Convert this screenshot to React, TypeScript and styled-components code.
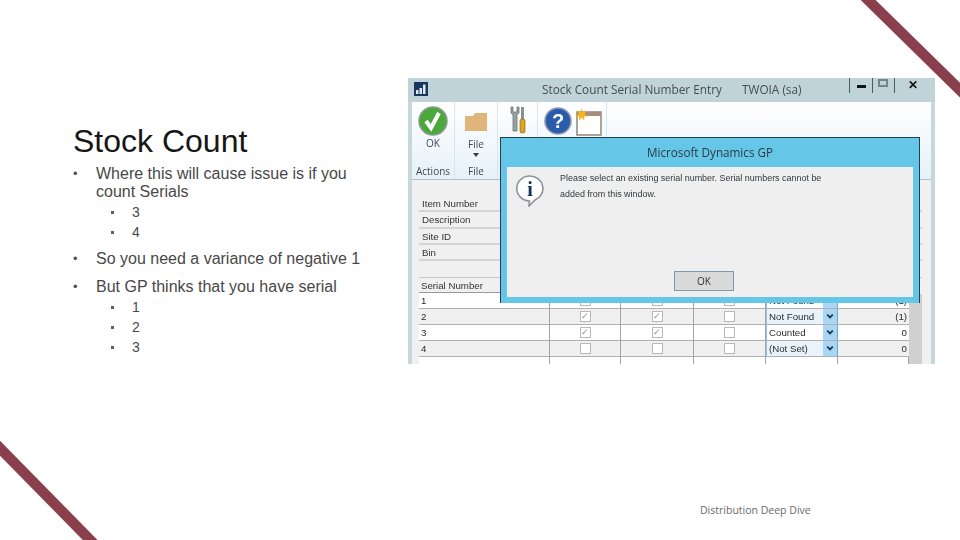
import React from 'react'
import styled, { createGlobalStyle } from 'styled-components'

const GlobalStyle = createGlobalStyle`
html, body {
  margin: 0;
  padding: 0;
  background: #ffffff;
}
`

const rows = [
  { id: '1', a: false, b: false, status: 'Not Found', variance: '(1)' },
  { id: '2', a: true, b: true, status: 'Not Found', variance: '(1)' },
  { id: '3', a: true, b: true, status: 'Counted', variance: '0' },
  { id: '4', a: false, b: false, status: '(Not Set)', variance: '0' },
]

const App: React.FC = () => {
  return (
    <Slide>
      <GlobalStyle />
      <Stripes viewBox="0 0 960 540">
        <line x1="862" y1="-6" x2="968" y2="98" />
        <line x1="-8" y1="440" x2="98" y2="548" />
      </Stripes>

      <TextColumn>
        <Title>Stock Count</Title>
        <Bullet>Where this will cause issue is if you count Serials</Bullet>
        <SubList>
          <SubBullet>3</SubBullet>
          <SubBullet>4</SubBullet>
        </SubList>
        <Bullet>So you need a variance of negative 1</Bullet>
        <Bullet>But GP thinks that you have serial</Bullet>
        <SubList>
          <SubBullet>1</SubBullet>
          <SubBullet>2</SubBullet>
          <SubBullet>3</SubBullet>
        </SubList>
      </TextColumn>

      <Window>
        <TitleBar>
          <AppIcon viewBox="0 0 14 14">
            <rect width="14" height="14" fill="#17375e" />
            <rect x="2" y="8" width="2.5" height="4" fill="#dfeaf2" />
            <rect x="5.5" y="6" width="2.5" height="6" fill="#dfeaf2" />
            <rect x="9" y="2.5" width="2.5" height="9.5" fill="#dfeaf2" />
          </AppIcon>
          <WindowTitle>Stock Count Serial Number Entry</WindowTitle>
          <WindowUser>TWOIA (sa)</WindowUser>
          <Controls>
            <Minimize />
            <Maximize />
            <CloseGlyph>✕</CloseGlyph>
          </Controls>
        </TitleBar>

        <Ribbon>
          <RibbonGroup $width={43}>
            <RibbonTop>
              <svg width="30" height="30" viewBox="0 0 30 30">
                <circle cx="15" cy="15" r="14" fill="#4aa93a" stroke="#8a9a94" strokeWidth="1.5" />
                <path d="M8 15l5 7 8-15" fill="none" stroke="#ffffff" strokeWidth="4" />
              </svg>
              <RibbonLabel>OK</RibbonLabel>
            </RibbonTop>
            <RibbonLabel>Actions</RibbonLabel>
          </RibbonGroup>
          <RibbonGroup $width={43}>
            <RibbonTop>
              <FolderIcon viewBox="0 0 24 20">
                <path d="M1 4h8l2-3h12v18H1z" fill="#dfb57a" />
              </FolderIcon>
              <RibbonLabel>File</RibbonLabel>
              <Caret />
            </RibbonTop>
            <RibbonLabel>File</RibbonLabel>
          </RibbonGroup>
          <ToolButton>
            <svg width="18" height="28" viewBox="0 0 18 28">
              <path d="M2 1v6l2 2v16h4V9l2-2V1L8 1v5H4V1z" fill="#9aa3a3" stroke="#5f6868" strokeWidth="0.7" />
              <rect x="12" y="1" width="3" height="12" fill="#8a8f8f" />
              <rect x="11" y="13" width="5" height="14" rx="2" fill="#e0a51e" stroke="#6b5310" strokeWidth="0.6" />
            </svg>
          </ToolButton>
          <ToolButton>
            <svg width="62" height="30" viewBox="0 0 62 30">
              <circle cx="17" cy="15" r="13" fill="#2a5cab" stroke="#8c9cb0" strokeWidth="1.6" />
              <text x="17" y="22" fontFamily="Liberation Sans" fontWeight="700" fontSize="20" textAnchor="middle" fill="#ffffff">?</text>
              <rect x="36" y="6" width="24" height="23" fill="#ffffff" stroke="#8b7f70" strokeWidth="1.4" />
              <rect x="36" y="6" width="24" height="4" fill="#a58f7b" />
              <path transform="translate(3 2)" d="M37 0l1.6 4 4-1.400-2 3.600 3.400 2-4 .6.4 4-2.600-3-3 3 .6-4-4-.8 3.600-2-2-3.400 4 1.400z" fill="#f7b422" />
            </svg>
          </ToolButton>
        </Ribbon>

        <Body>
          <FormFields>
            <Field>Item Number</Field>
            <Field>Description</Field>
            <Field>Site ID</Field>
            <Field>Bin</Field>
          </FormFields>

          <GridWrap>
            <SerialGrid>
              <HeaderCell>Serial Number</HeaderCell>
              <HeaderCell />
              <HeaderCell />
              <HeaderCell />
              <HeaderCell />
              <HeaderCell />
              {rows.map((row, i) => (
                <React.Fragment key={row.id}>
                  <Cell $shaded={i % 2 === 1}>{row.id}</Cell>
                  <CheckCell $shaded={i % 2 === 1}><CheckBox $checked={row.a}>{row.a ? '✓' : ''}</CheckBox></CheckCell>
                  <CheckCell $shaded={i % 2 === 1}><CheckBox $checked={row.b}>{row.b ? '✓' : ''}</CheckBox></CheckCell>
                  <CheckCell $shaded={i % 2 === 1}><CheckBox $checked={false} /></CheckCell>
                  <SelectCell $shaded={i % 2 === 1}>
                    <span>{row.status}</span>
                    <SelectArrow viewBox="0 0 14 16">
                      <path d="M4 6l3 3 3-3" fill="none" stroke="#1d3a55" strokeWidth="2" />
                    </SelectArrow>
                  </SelectCell>
                  <NumberCell $shaded={i % 2 === 1}>{row.variance}</NumberCell>
                </React.Fragment>
              ))}
              <EmptyCell />
              <EmptyCell />
              <EmptyCell />
              <EmptyCell />
              <EmptyCell />
              <EmptyCell />
            </SerialGrid>
            <ScrollTrack />
          </GridWrap>
        </Body>

        <Dialog>
          <DialogTitle>Microsoft Dynamics GP</DialogTitle>
          <DialogBody>
            <DialogMessage>
              <InfoIcon viewBox="0 0 28 32">
                <path d="M14 1a13 12.500 0 0 1 5 24l-6 6 .5-5A13 12.500 0 0 1 14 1z" fill="#ffffff" stroke="#8d9299" strokeWidth="1.6" />
                <text x="14" y="21" fontFamily="Liberation Serif" fontWeight="700" fontSize="20" textAnchor="middle" fill="#17305a">i</text>
              </InfoIcon>
              <MessageText>
                Please select an existing serial number. Serial numbers cannot be
                <br />
                added from this window.
              </MessageText>
            </DialogMessage>
            <DialogActions>
              <OkButton>OK</OkButton>
            </DialogActions>
          </DialogBody>
        </Dialog>
      </Window>

      <Footer>Distribution Deep Dive</Footer>
    </Slide>
  )
}

export default App

const Slide = styled.div`
position: relative;
display: flex;
align-items: flex-start;
width: 960px;
height: 540px;
overflow: hidden;
background: #ffffff;
font-family: "Liberation Sans", sans-serif;
`

const Stripes = styled.svg`
position: absolute;
left: 0;
top: 0;
width: 960px;
height: 540px;
line {
  stroke: #8a3f4c;
  stroke-width: 10.5;
}
`

const TextColumn = styled.div`
box-sizing: border-box;
flex: 0 0 408px;
padding: 123px 40px 0 73px;
color: #484848;
`

const Title = styled.h1`
margin: 0 0 5px;
font-size: 32px;
font-weight: 400;
line-height: 37px;
color: #161616;
`

const Bullet = styled.div`
position: relative;
margin-bottom: 10px;
padding-left: 23px;
font-size: 16px;
line-height: 18px;
&::before {
  content: "•";
  position: absolute;
  left: 0;
  top: 0;
  color: #5f4a50;
  font-size: 13px;
}
`

const SubList = styled.div`
display: flex;
flex-direction: column;
margin: -9px 0 7px;
`

const SubBullet = styled.div`
position: relative;
height: 20.300px;
padding-left: 59px;
font-size: 14px;
line-height: 20px;
&::before {
  content: "";
  position: absolute;
  left: 38px;
  top: 9px;
  width: 3px;
  height: 3px;
  background: #6a5a60;
}
`

const Window = styled.div`
position: relative;
flex: 0 0 527px;
display: flex;
flex-direction: column;
height: 286px;
margin-top: 78px;
overflow: hidden;
background: #c6d8dc;
filter: blur(0.4px);
`

const TitleBar = styled.div`
display: flex;
align-items: center;
flex: 0 0 24px;
padding: 0 0 2px 6px;
box-sizing: border-box;
background: #bfd3d9;
color: #444c50;
`

const AppIcon = styled.svg`
width: 14px;
height: 14px;
`

const WindowTitle = styled.span`
margin-left: 114px;
width: 200px;
font-family: "Open Sans", sans-serif;
font-size: 11.800px;
white-space: nowrap;
`

const WindowUser = styled.span`
font-family: "Open Sans", sans-serif;
font-size: 11.800px;
white-space: nowrap;
`

const Controls = styled.div`
display: flex;
align-items: center;
height: 100%;
margin-left: auto;
padding-right: 17px;
transform: translateY(-4px);
`

const Minimize = styled.div`
box-sizing: border-box;
width: 23px;
height: 16px;
border-left: 1px solid #4d5c62;
&::after {
  content: "";
  display: block;
  width: 9px;
  height: 3px;
  margin: 8px 0 0 7px;
  background: #111111;
}
`

const Maximize = styled.div`
box-sizing: border-box;
width: 23px;
height: 16px;
border-left: 1px solid #4d5c62;
border-right: 1px solid #4d5c62;
&::after {
  content: "";
  display: block;
  box-sizing: border-box;
  width: 10px;
  height: 8px;
  margin: 2px 0 0 5px;
  border: 2px solid #75858c;
}
`

const CloseGlyph = styled.span`
margin-left: 13px;
font-size: 12px;
font-weight: 700;
color: #111111;
`

const Ribbon = styled.div`
display: flex;
flex: 0 0 78px;
box-sizing: border-box;
margin: 0 4px;
border-bottom: 1px solid #b9bfc2;
background: linear-gradient(#ffffff, #e6f1fa);
`

const RibbonGroup = styled.div<{ $width: number }>`
box-sizing: border-box;
display: flex;
flex-direction: column;
align-items: center;
justify-content: space-between;
width: ${(p) => p.$width}px;
padding: 4px 0 2px;
border-right: 1px solid #d9e4ec;
`

const RibbonTop = styled.div`
display: flex;
flex-direction: column;
align-items: center;
gap: 1px;
`

const FolderIcon = styled.svg`
width: 24px;
height: 20px;
margin: 6px 0 5px;
`

const RibbonLabel = styled.span`
font-family: "Open Sans", sans-serif;
font-size: 10px;
line-height: 12px;
color: #3d4a55;
`

const Caret = styled.div`
width: 0;
height: 0;
margin-top: 2px;
border-left: 3.500px solid transparent;
border-right: 3.500px solid transparent;
border-top: 4px solid #333c44;
`

const ToolButton = styled.div`
display: flex;
justify-content: center;
box-sizing: border-box;
min-width: 40px;
padding: 4px 3px 0;
border-right: 1px solid #d9e4ec;
height: 36px;
`

const Body = styled.div`
flex: 1;
box-sizing: border-box;
margin: 0 4px;
padding: 16px 9px 0 7px;
background: #f0f0f0;
`

const FormFields = styled.div`
display: flex;
flex-direction: column;
width: 100%;
margin-bottom: 16px;
`

const Field = styled.div`
box-sizing: border-box;
height: 16.300px;
padding-left: 3px;
border-bottom: 2px solid #d4d4d4;
font-size: 9.700px;
line-height: 15px;
color: #333333;
`

const GridWrap = styled.div`
display: flex;
`

const SerialGrid = styled.div`
display: grid;
grid-template-columns: 131px 71px 73px 72px 72px 71px;
grid-auto-rows: 16px;
width: 490px;
background: #ffffff;
`

const HeaderCell = styled.div`
box-sizing: border-box;
height: 16px;
padding-left: 2px;
border-top: 1px solid #c8c8c8;
border-bottom: 1px solid #9a9a9a;
background: #f0f0f0;
font-size: 9.700px;
line-height: 15px;
color: #333333;
white-space: nowrap;
`

const Cell = styled.div<{ $shaded: boolean }>`
box-sizing: border-box;
padding-left: 2px;
border-right: 1px solid #a4a4a4;
border-bottom: 1px solid #b0b0b0;
background: ${(p) => (p.$shaded ? '#f0f0f0' : '#ffffff')};
font-size: 9.700px;
line-height: 15px;
color: #2a2a2a;
`

const CheckCell = styled(Cell)`
display: flex;
align-items: center;
justify-content: center;
padding: 0;
`

const CheckBox = styled.div<{ $checked: boolean }>`
box-sizing: border-box;
width: 11px;
height: 11px;
border: 1px solid #b8b8b8;
background: #ffffff;
font-size: 9px;
line-height: 9px;
text-align: center;
color: #8e8e8e;
`

const SelectCell = styled(Cell)`
display: flex;
justify-content: space-between;
padding: 0 0 0 2px;
border-right: 1px solid #6aa9d6;
border-left: 1px solid #8fc3e6;
background: ${(p) => (p.$shaded ? '#eaf3fa' : '#ffffff')};
span {
  white-space: nowrap;
}
`

const SelectArrow = styled.svg`
width: 14px;
height: 15px;
background: #a9d6f3;
`

const NumberCell = styled(Cell)`
padding: 0 2px 0 0;
border-right: none;
text-align: right;
`

const EmptyCell = styled.div`
height: 16px;
border-right: 1px solid #a4a4a4;
background: #ffffff;
`

const ScrollTrack = styled.div`
width: 13px;
background: linear-gradient(#f0f0f0 16px, #d0d0d0 16px);
border-top: 1px solid #c8c8c8;
`

const Dialog = styled.div`
position: absolute;
left: 92px;
top: 59px;
box-sizing: border-box;
display: flex;
flex-direction: column;
width: 420px;
height: 166px;
padding: 0 6px 6px;
border-top: 1px solid #20404f;
border-left: 1px solid #20404f;
border-right: 1px solid #20404f;
background: #66c6e8;
`

const DialogTitle = styled.div`
flex: 0 0 26px;
font-family: "Open Sans", sans-serif;
font-size: 11.700px;
line-height: 29px;
text-align: center;
color: #2b3a42;
`

const DialogBody = styled.div`
flex: 1;
display: flex;
flex-direction: column;
justify-content: space-between;
background: #efefef;
`

const DialogMessage = styled.div`
display: flex;
gap: 16px;
padding: 8px 0 0 9px;
`

const InfoIcon = styled.svg`
flex: 0 0 28px;
width: 28px;
height: 32px;
`

const MessageText = styled.div`
margin-top: -5px;
font-family: "Liberation Sans", sans-serif;
font-size: 8.950px;
line-height: 16px;
color: #33383c;
`

const DialogActions = styled.div`
display: flex;
justify-content: flex-end;
padding: 0 179px 6px 0;
`

const OkButton = styled.div`
box-sizing: border-box;
width: 60px;
height: 20px;
border: 1px solid #7f9db2;
background: #dadada;
font-family: "Open Sans", sans-serif;
font-size: 10px;
line-height: 18px;
text-align: center;
color: #333333;
`

const Footer = styled.div`
position: absolute;
left: 700px;
top: 503px;
font-family: "Open Sans", sans-serif;
font-size: 10.500px;
line-height: 15px;
color: #6a6a6a;
`
